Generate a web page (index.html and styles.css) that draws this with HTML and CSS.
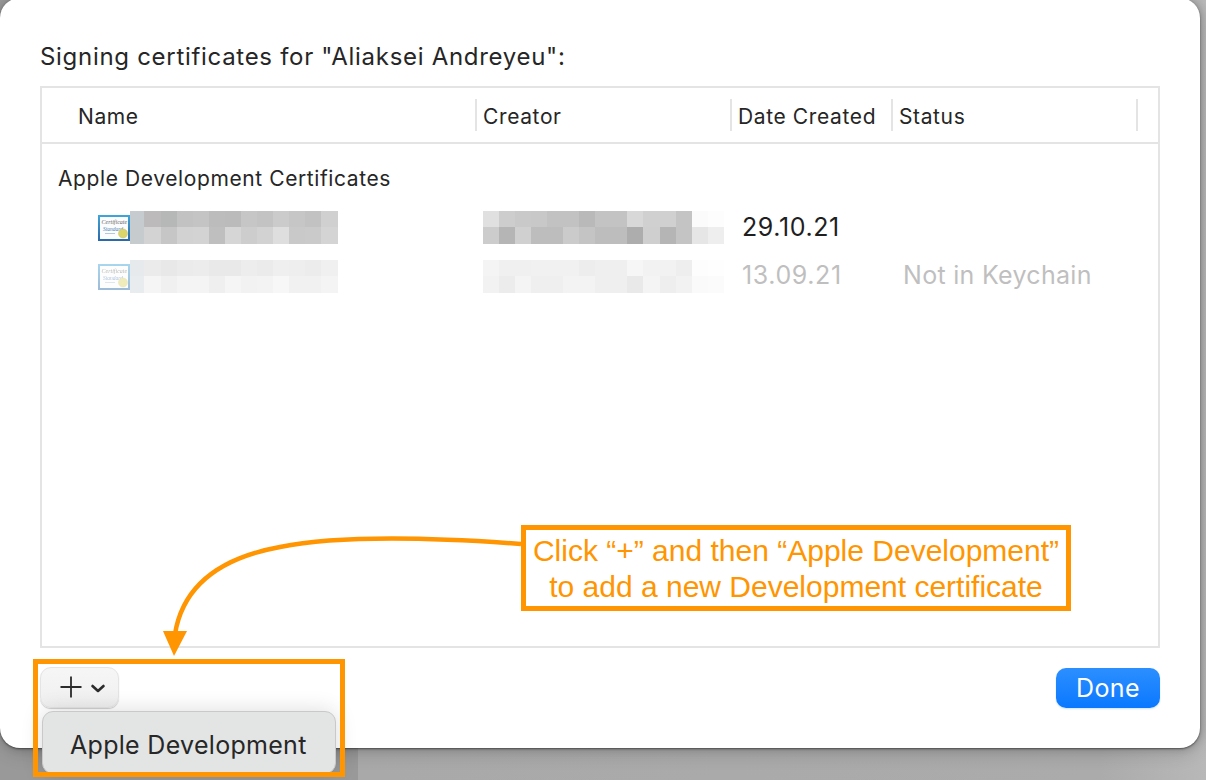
FILE: index.html
```html
<!DOCTYPE html>
<html lang="en">
<head>
<meta charset="utf-8">
<title>Signing certificates</title>
<link rel="stylesheet" href="styles.css">
</head>
<body>
<main class="dialog">
  <h1 class="title">Signing certificates for "Aliaksei Andreyeu":</h1>
  <section class="table">
    <div class="grid head">
      <div class="hcell first">Name</div>
      <div class="hcell">Creator</div>
      <div class="hcell">Date Created</div>
      <div class="hcell">Status</div>
      <div class="hcell"></div>
    </div>
    <div class="list">
      <div class="group">Apple Development Certificates</div>
      <div class="grid row">
        <div class="cell namecell">
          <svg class="cert" width="32" height="26" viewBox="0 0 32 26">
            <defs><linearGradient id="fr" x1="0" y1="0" x2="0" y2="1"><stop offset="0" stop-color="#3fa6da"/><stop offset="1" stop-color="#2a68a8"/></linearGradient></defs>
            <rect width="32" height="26" fill="url(#fr)"/>
            <rect x="2" y="2" width="28" height="22" fill="#fbfcfd"/>
            <text x="3.500" y="8.500" class="c1">Certificate</text>
            <text x="5" y="15.500" class="c2">Standard</text>
            <path d="M7 18.500h10" stroke="#b4c8dc" stroke-width="1"/>
            <circle cx="25" cy="18.500" r="4.500" fill="#dcd56a" stroke="#c4bc6c" stroke-width=".5"/>
          </svg>
          <svg class="mosaic" width="208" height="33" viewBox="0 0 208 33">
            <rect x="0" y="0" width="14" height="16" fill="#c5cbce"/><rect x="14" y="0" width="17" height="16" fill="#bcbaba"/><rect x="31" y="0" width="16" height="16" fill="#b5b8b6"/><rect x="47" y="0" width="16" height="16" fill="#c2c2c2"/><rect x="63" y="0" width="16" height="16" fill="#c4c4c4"/><rect x="79" y="0" width="16" height="16" fill="#bcbcbc"/><rect x="95" y="0" width="16" height="16" fill="#bbbbbb"/><rect x="111" y="0" width="16" height="16" fill="#c6c6c6"/><rect x="127" y="0" width="16" height="16" fill="#c3c3c3"/><rect x="143" y="0" width="16" height="16" fill="#cbcbcb"/><rect x="159" y="0" width="16" height="16" fill="#c6c6c6"/><rect x="175" y="0" width="16" height="16" fill="#c2c2c2"/><rect x="191" y="0" width="17" height="16" fill="#d0d0d0"/>
            <rect x="0" y="16" width="14" height="17" fill="#c6cbce"/><rect x="14" y="16" width="17" height="17" fill="#d3d3d3"/><rect x="31" y="16" width="16" height="17" fill="#c6c6c6"/><rect x="47" y="16" width="16" height="17" fill="#d2d2d2"/><rect x="63" y="16" width="16" height="17" fill="#d3d3d3"/><rect x="79" y="16" width="16" height="17" fill="#bfbfbf"/><rect x="95" y="16" width="16" height="17" fill="#d6d6d6"/><rect x="111" y="16" width="16" height="17" fill="#cdcdcd"/><rect x="127" y="16" width="16" height="17" fill="#d2d2d2"/><rect x="143" y="16" width="16" height="17" fill="#dedede"/><rect x="159" y="16" width="16" height="17" fill="#c9c9c9"/><rect x="175" y="16" width="16" height="17" fill="#cacaca"/><rect x="191" y="16" width="17" height="17" fill="#d4d4d4"/>
          </svg>
        </div>
        <div class="cell creatorcell">
          <svg class="mosaic" width="241" height="33" viewBox="0 0 241 33">
            <rect x="0" y="0" width="16" height="16" fill="#e0e0e0"/><rect x="16" y="0" width="16" height="16" fill="#cdcdcd"/><rect x="32" y="0" width="16" height="16" fill="#c9c9c9"/><rect x="48" y="0" width="16" height="16" fill="#c8c8c8"/><rect x="64" y="0" width="16" height="16" fill="#c2c2c2"/><rect x="80" y="0" width="16" height="16" fill="#c2c2c2"/><rect x="96" y="0" width="16" height="16" fill="#b9b9b9"/><rect x="112" y="0" width="16" height="16" fill="#c3c3c3"/><rect x="128" y="0" width="16" height="16" fill="#c3c3c3"/><rect x="144" y="0" width="16" height="16" fill="#d8d8d8"/><rect x="160" y="0" width="17" height="16" fill="#d0d0d0"/><rect x="177" y="0" width="16" height="16" fill="#d0d0d0"/><rect x="193" y="0" width="16" height="16" fill="#c4c4c4"/><rect x="209" y="0" width="16" height="16" fill="#fbfbfb"/><rect x="225" y="0" width="16" height="16" fill="#fdfdfd"/>
            <rect x="0" y="16" width="16" height="17" fill="#cccccc"/><rect x="16" y="16" width="16" height="17" fill="#b5b5b5"/><rect x="32" y="16" width="16" height="17" fill="#d0d0d0"/><rect x="48" y="16" width="16" height="17" fill="#bdbdbd"/><rect x="64" y="16" width="16" height="17" fill="#bdbdbd"/><rect x="80" y="16" width="16" height="17" fill="#cbcbcb"/><rect x="96" y="16" width="16" height="17" fill="#c4c4c4"/><rect x="112" y="16" width="16" height="17" fill="#bdbdbd"/><rect x="128" y="16" width="16" height="17" fill="#bdbdbd"/><rect x="144" y="16" width="16" height="17" fill="#adadad"/><rect x="160" y="16" width="17" height="17" fill="#cfcfcf"/><rect x="177" y="16" width="16" height="17" fill="#b5b5b5"/><rect x="193" y="16" width="16" height="17" fill="#c4c4c4"/><rect x="209" y="16" width="16" height="17" fill="#e6e6e6"/><rect x="225" y="16" width="16" height="17" fill="#eeeeee"/>
          </svg>
        </div>
        <div class="cell datecell">29.10.21</div>
        <div class="cell statuscell"></div>
        <div class="cell"></div>
      </div>
      <div class="grid row dim">
        <div class="cell namecell">
          <svg class="cert faded" width="32" height="26" viewBox="0 0 32 26">
            <rect width="32" height="26" fill="url(#fr)"/>
            <rect x="2" y="2" width="28" height="22" fill="#fbfcfd"/>
            <text x="3.500" y="8.500" class="c1">Certificate</text>
            <text x="5" y="15.500" class="c2">Standard</text>
            <path d="M7 18.500h10" stroke="#b4c8dc" stroke-width="1"/>
            <circle cx="25" cy="18.500" r="4.500" fill="#dcd56a" stroke="#c4bc6c" stroke-width=".5"/>
          </svg>
          <svg class="mosaic" width="208" height="33" viewBox="0 0 208 33">
            <rect x="0" y="0" width="14" height="16" fill="#e6eaec"/><rect x="14" y="0" width="17" height="16" fill="#ebebeb"/><rect x="31" y="0" width="16" height="16" fill="#e8e8e8"/><rect x="47" y="0" width="16" height="16" fill="#ebebeb"/><rect x="63" y="0" width="16" height="16" fill="#ececec"/><rect x="79" y="0" width="16" height="16" fill="#e9e9e9"/><rect x="95" y="0" width="16" height="16" fill="#e9e9e9"/><rect x="111" y="0" width="16" height="16" fill="#ededed"/><rect x="127" y="0" width="16" height="16" fill="#ebebeb"/><rect x="143" y="0" width="16" height="16" fill="#efefef"/><rect x="159" y="0" width="16" height="16" fill="#eeeeee"/><rect x="175" y="0" width="16" height="16" fill="#ececec"/><rect x="191" y="0" width="17" height="16" fill="#f0f0f0"/>
            <rect x="0" y="16" width="14" height="17" fill="#e8ecee"/><rect x="14" y="16" width="17" height="17" fill="#f5f5f5"/><rect x="31" y="16" width="16" height="17" fill="#f0f0f0"/><rect x="47" y="16" width="16" height="17" fill="#f4f4f4"/><rect x="63" y="16" width="16" height="17" fill="#f4f4f4"/><rect x="79" y="16" width="16" height="17" fill="#efefef"/><rect x="95" y="16" width="16" height="17" fill="#f5f5f5"/><rect x="111" y="16" width="16" height="17" fill="#f2f2f2"/><rect x="127" y="16" width="16" height="17" fill="#f3f3f3"/><rect x="143" y="16" width="16" height="17" fill="#f7f7f7"/><rect x="159" y="16" width="16" height="17" fill="#f1f1f1"/><rect x="175" y="16" width="16" height="17" fill="#f1f1f1"/><rect x="191" y="16" width="17" height="17" fill="#f4f4f4"/>
          </svg>
        </div>
        <div class="cell creatorcell">
          <svg class="mosaic" width="241" height="33" viewBox="0 0 241 33">
            <rect x="0" y="0" width="16" height="16" fill="#f4f4f4"/><rect x="16" y="0" width="16" height="16" fill="#f0f0f0"/><rect x="32" y="0" width="16" height="16" fill="#f0f0f0"/><rect x="48" y="0" width="16" height="16" fill="#f1f1f1"/><rect x="64" y="0" width="16" height="16" fill="#f1f1f1"/><rect x="80" y="0" width="16" height="16" fill="#f1f1f1"/><rect x="96" y="0" width="16" height="16" fill="#ededed"/><rect x="112" y="0" width="16" height="16" fill="#efefef"/><rect x="128" y="0" width="16" height="16" fill="#efefef"/><rect x="144" y="0" width="16" height="16" fill="#f6f6f6"/><rect x="160" y="0" width="17" height="16" fill="#f2f2f2"/><rect x="177" y="0" width="16" height="16" fill="#f2f2f2"/><rect x="193" y="0" width="16" height="16" fill="#eeeeee"/><rect x="209" y="0" width="16" height="16" fill="#fdfdfd"/><rect x="225" y="0" width="16" height="16" fill="#fefefe"/>
            <rect x="0" y="16" width="16" height="17" fill="#f2f2f2"/><rect x="16" y="16" width="16" height="17" fill="#ececec"/><rect x="32" y="16" width="16" height="17" fill="#f4f4f4"/><rect x="48" y="16" width="16" height="17" fill="#efefef"/><rect x="64" y="16" width="16" height="17" fill="#efefef"/><rect x="80" y="16" width="16" height="17" fill="#f3f3f3"/><rect x="96" y="16" width="16" height="17" fill="#f3f3f3"/><rect x="112" y="16" width="16" height="17" fill="#efefef"/><rect x="128" y="16" width="16" height="17" fill="#efefef"/><rect x="144" y="16" width="16" height="17" fill="#e9e9e9"/><rect x="160" y="16" width="17" height="17" fill="#f4f4f4"/><rect x="177" y="16" width="16" height="17" fill="#eeeeee"/><rect x="193" y="16" width="16" height="17" fill="#f2f2f2"/><rect x="209" y="16" width="16" height="17" fill="#fafafa"/><rect x="225" y="16" width="16" height="17" fill="#fbfbfb"/>
          </svg>
        </div>
        <div class="cell datecell">13.09.21</div>
        <div class="cell statuscell">Not in Keychain</div>
        <div class="cell"></div>
      </div>
    </div>
  </section>
  <footer class="footer">
    <button class="addbtn" type="button" aria-label="Add">
      <svg width="46" height="22" viewBox="0 0 46 22">
        <path d="M11 0.500V21.500M0.500 11H21.500" fill="none" stroke="#2b2b2b" stroke-width="1.800"/>
        <path d="M32.500 10L38 15L43.500 10" fill="none" stroke="#2b2b2b" stroke-width="2.600" stroke-linecap="round" stroke-linejoin="round"/>
      </svg>
    </button>
    <button class="done" type="button">Done</button>
  </footer>
</main>
<div class="menu">Apple Development</div>
<div class="callout">Click “+” and then “Apple Development”<br>to add a new Development certificate</div>
<div class="highlight"></div>
<svg class="arrow" width="1206" height="780" viewBox="0 0 1206 780">
  <path d="M521 544C440 538 340 535 280 547C220 558 183 585 175 634" fill="none" stroke="#ff9500" stroke-width="4.500"/>
  <path d="M163 631H187L174 656Z" fill="#ff9500"/>
</svg>
</body>
</html>
```
FILE: styles.css
```css
* { box-sizing: border-box; }
html, body { margin: 0; height: 780px; overflow: hidden; }
body {
  position: relative;
  width: 1206px;
  background: linear-gradient(90deg, #999 0, #999 358px, #a9a9a9 358px, #ababab 1100px, #b8b8b8 1206px);
  font-family: Inter, "Noto Sans", sans-serif;
  color: #262626;
}
.dialog {
  width: 1200px;
  height: 750px;
  margin-top: -2px;
  padding: 43px 40px 0;
  background: #fff;
  border-radius: 20px;
  box-shadow: 0 1px 2px rgba(0,0,0,.45), 1px 0 8px rgba(0,0,0,.22), 0 6px 18px rgba(0,0,0,.14);
  display: flex;
  flex-direction: column;
}
.title {
  margin: 0 0 15px;
  font-size: 24px;
  letter-spacing: .7px;
  font-weight: 400;
  line-height: 32px;
  height: 30px;
  white-space: nowrap;
}
.table {
  height: 562px;
  border: 2px solid #e4e4e4;
}
.grid {
  display: grid;
  grid-template-columns: 433px 255px 161px 245px 22px;
}
.head {
  height: 56px;
  border-bottom: 2px solid #e4e4e4;
  align-items: center;
}
.hcell {
  height: 32px;
  border-left: 2px solid #e4e4e4;
  padding-left: 6px;
  font-size: 21px;
  letter-spacing: .62px;
  line-height: 36px;
  white-space: nowrap;
}
.hcell.first { border-left: 0; padding-left: 36px; }
.group {
  padding: 23px 0 0 16px;
  height: 59px;
  font-size: 21px;
  letter-spacing: .6px;
  line-height: 24px;
}
.row { height: 49px; align-items: center; }
.cell { display: flex; align-items: center; white-space: nowrap; }
.namecell { padding-left: 56px; }
.creatorcell { padding-left: 7.500px; }
.datecell { padding-left: 12px; padding-bottom: 2px; font-size: 25px; letter-spacing: .6px; color: #1f1f1f; }
.statuscell { padding-left: 12px; padding-bottom: 2px; font-size: 25px; letter-spacing: .3px; }
.dim .datecell, .dim .statuscell { color: #bfbfbf; padding-bottom: 4px; }
.cert { flex: none; display: block; }
.cert.faded { opacity: .45; }
.c1 { font: italic 6px "Liberation Serif", serif; fill: #666; }
.c2 { font: italic 5.500px "Liberation Serif", serif; fill: #4f7fb5; }
.mosaic { flex: none; display: block; filter: blur(.4px); }
.footer {
  display: flex;
  justify-content: space-between;
  align-items: flex-start;
  padding-top: 19px;
}
.addbtn {
  width: 79px;
  height: 41px;
  padding: 0 0 2px 19px;
  display: flex;
  align-items: center;
  justify-content: flex-start;
  border: 1px solid #e4e4e4;
  border-radius: 11px;
  background: linear-gradient(#f6f6f6, #efefef);
  box-shadow: 0 1px 1px rgba(0,0,0,.2);
}
.done {
  width: 104px;
  height: 40px;
  margin-top: 1px;
  padding: 0;
  border: 0;
  border-radius: 10px;
  background: linear-gradient(#2c8fff, #0a78ff);
  color: #fff;
  font: 400 25px/36px Inter, sans-serif;
  letter-spacing: .4px;
  box-shadow: 0 1px 2px rgba(0,110,255,.2);
}
.menu {
  position: absolute;
  left: 42px;
  top: 711px;
  width: 294px;
  height: 63px;
  padding-left: 27px;
  border: 1px solid #c9c9c9;
  border-radius: 11px;
  background: #e3e4e4;
  box-shadow: 0 0 22px rgba(0,0,0,.14);
  font-size: 25px;
  letter-spacing: .3px;
  line-height: 66px;
  color: #272727;
  white-space: nowrap;
}
.callout {
  position: absolute;
  left: 521px;
  top: 525px;
  width: 550px;
  height: 86px;
  border: 5px solid #ff9500;
  background: #fff;
  color: #ff9500;
  font: 30px/36px "Liberation Sans", sans-serif;
  text-align: center;
  white-space: nowrap;
  padding-top: 3px;
}
.highlight {
  position: absolute;
  left: 33px;
  top: 659px;
  width: 312px;
  height: 118px;
  border: 5px solid #ff9500;
}
.arrow { position: absolute; left: 0; top: 0; pointer-events: none; }
```
